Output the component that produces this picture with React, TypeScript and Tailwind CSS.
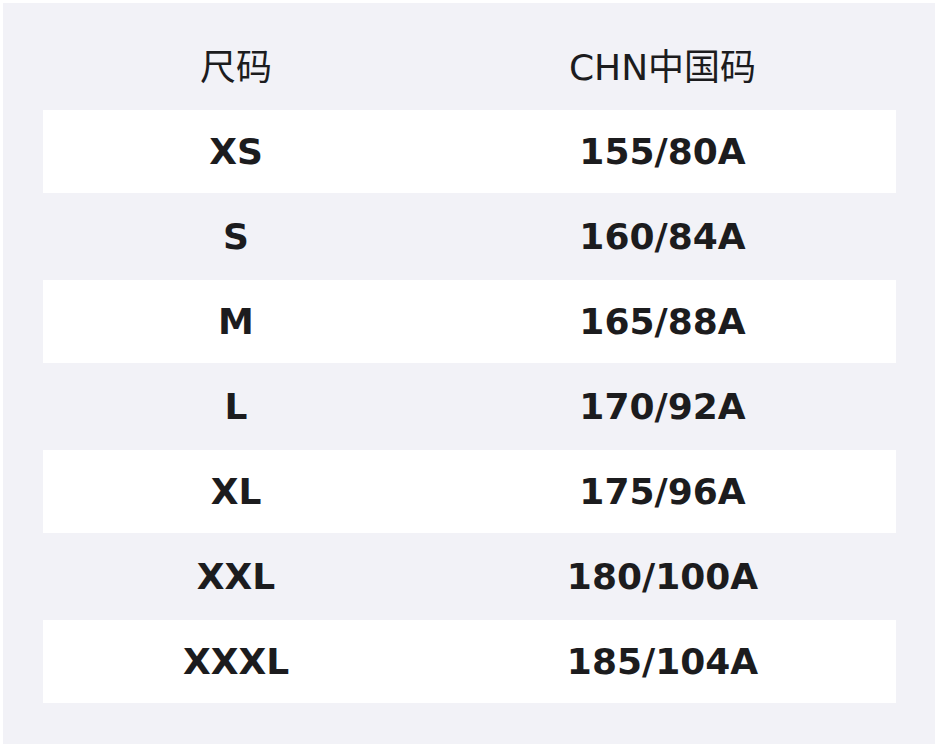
const rows = [
  { size: "XS", chn: "155/80A" },
  { size: "S", chn: "160/84A" },
  { size: "M", chn: "165/88A" },
  { size: "L", chn: "170/92A" },
  { size: "XL", chn: "175/96A" },
  { size: "XXL", chn: "180/100A" },
  { size: "XXXL", chn: "185/104A" },
];

export default function App() {
  return (
    <div
      className="w-[940px] h-[748px] bg-white pt-[3px] pl-[3px]"
      style={{ fontFamily: '"DejaVu Sans", "Noto Sans CJK SC", sans-serif' }}
    >
      <div className="w-[932px] h-[741px] bg-[#f2f2f7] pl-[40px] pt-[22px] text-[#1c1c1e]">
        {/* 表头 */}
        <div className="flex w-[853px] h-[85px] items-center text-[36px]">
          <div className="w-[386px] text-center">尺码</div>
          <div className="w-[467px] text-center">CHN中国码</div>
        </div>

        {rows.map((row, i) => (
          <div
            key={row.size}
            className={
              i % 2 === 0
                ? "flex w-[853px] h-[83px] items-center bg-white text-[36px] font-bold"
                : "flex w-[853px] h-[87px] items-center text-[36px] font-bold"
            }
          >
            <div className="w-[386px] text-center">{row.size}</div>
            <div className="w-[467px] text-center">{row.chn}</div>
          </div>
        ))}
      </div>
    </div>
  );
}
